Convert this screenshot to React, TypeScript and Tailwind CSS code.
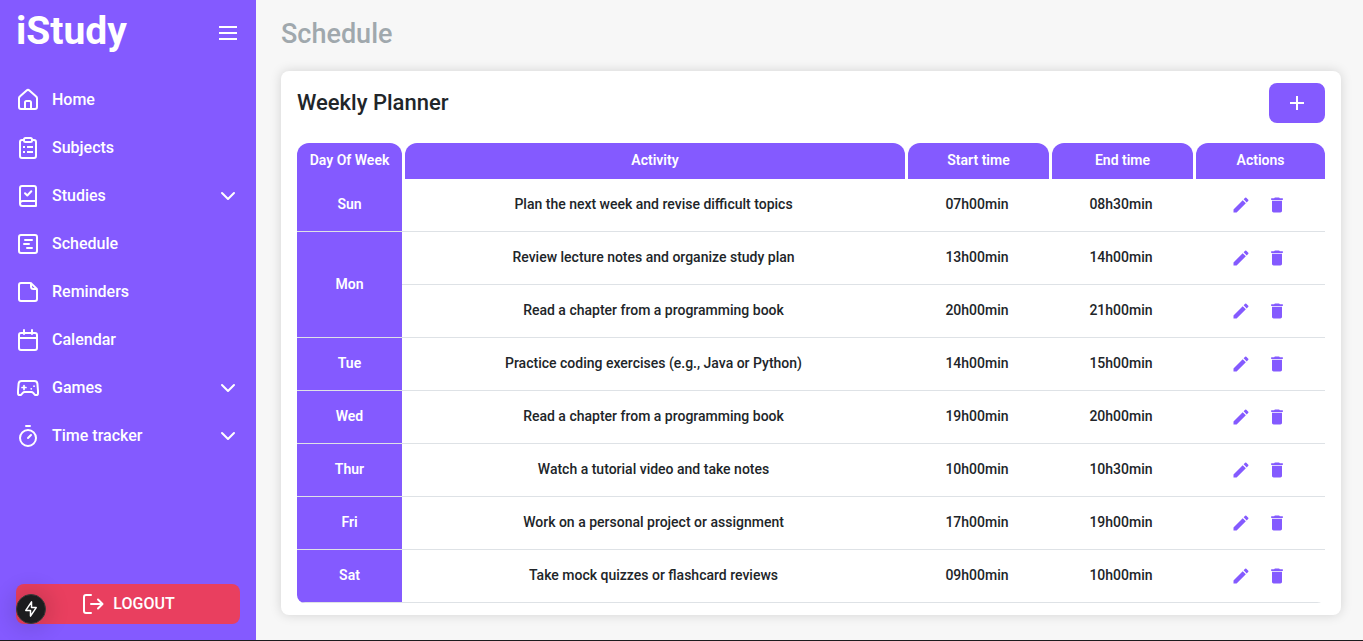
import type { ReactNode } from "react";
import { MdAdd, MdDelete, MdEdit } from "react-icons/md";

function Icon({ children }: { children: ReactNode }) {
  return (
    <svg
      viewBox="0 0 24 24"
      className="size-6 shrink-0"
      fill="none"
      stroke="currentColor"
      strokeWidth="2"
      strokeLinecap="round"
      strokeLinejoin="round"
      aria-hidden="true"
    >
      {children}
    </svg>
  );
}

const nav: { label: string; icon: ReactNode; expandable?: boolean }[] = [
  {
    label: "Home",
    icon: (
      <>
        <path d="M3 10.300c0-.7.3-1.300.8-1.700l6.800-6.100c.8-.7 2-.7 2.800 0l6.800 6.100c.5.4.8 1 .8 1.700V19c0 1.100-.9 2-2 2H5c-1.100 0-2-.9-2-2z" />
        <path d="M9 21v-6.500c0-1 .5-1.500 1.500-1.500h3c1 0 1.500.5 1.500 1.500V21" />
      </>
    ),
  },
  {
    label: "Subjects",
    icon: (
      <>
        <path d="M8 4H6a2 2 0 0 0-2 2v14a2 2 0 0 0 2 2h12a2 2 0 0 0 2-2V6a2 2 0 0 0-2-2h-2" />
        <rect x="8" y="2" width="8" height="4" rx="1.500" />
        <path strokeLinecap="butt" d="M7 11h2M11 11h6M7 16h2M11 16h6" />
      </>
    ),
  },
  {
    label: "Studies",
    expandable: true,
    icon: (
      <>
        <path d="M20 17V4a2 2 0 0 0-2-2H6a2 2 0 0 0-2 2v15.500M20 17H6.500a2.500 2.500 0 0 0 0 5H20z" />
        <path d="m9 9.200 2.300 2.300 4-4.300" />
      </>
    ),
  },
  {
    label: "Schedule",
    icon: (
      <>
        <rect x="3" y="3" width="18" height="18" rx="2" />
        <path d="M9 8h7M8 12h5M11 16h5" />
      </>
    ),
  },
  {
    label: "Reminders",
    icon: (
      <>
        <path d="M14 3H5a2 2 0 0 0-2 2v14a2 2 0 0 0 2 2h14a2 2 0 0 0 2-2v-9c0-.6-.2-1.100-.6-1.500l-4.900-4.900C15.100 3.200 14.600 3 14 3z" />
        <path d="M15 3.500v3A2.500 2.500 0 0 0 17.500 9h3" />
      </>
    ),
  },
  {
    label: "Calendar",
    icon: (
      <>
        <rect x="3" y="5" width="18" height="17" rx="2" />
        <path d="M3 10h18M8 2v4M16 2v4" />
      </>
    ),
  },
  {
    label: "Games",
    expandable: true,
    icon: (
      <>
        <path d="M5.600 5h12.800c1.600 0 2.800 1 3 2.600L22 15v2.200c0 1.100-.8 1.900-1.900 1.900-.6 0-1.200-.3-1.600-.8l-1.300-1.500c-.5-.6-1.100-.9-1.900-.9H8.700c-.8 0-1.400.3-1.900.9l-1.300 1.500c-.4.5-1 .8-1.600.8-1.100 0-1.900-.8-1.900-1.900V15l.6-7.400C2.800 6 4 5 5.600 5z" />
        <path strokeWidth="1.700" d="M8 9.500v4M6 11.500h4M15.200 12.800h.1M18 10.200h.1" />
      </>
    ),
  },
  {
    label: "Time tracker",
    expandable: true,
    icon: (
      <>
        <circle cx="12" cy="14" r="8" />
        <path d="m12 14 3-3M10 2h4" />
      </>
    ),
  },
];

type Entry = { activity: string; start: string; end: string };

const days: { day: string; entries: Entry[] }[] = [
  { day: "Sun", entries: [{ activity: "Plan the next week and revise difficult topics", start: "07h00min", end: "08h30min" }] },
  {
    day: "Mon",
    entries: [
      { activity: "Review lecture notes and organize study plan", start: "13h00min", end: "14h00min" },
      { activity: "Read a chapter from a programming book", start: "20h00min", end: "21h00min" },
    ],
  },
  { day: "Tue", entries: [{ activity: "Practice coding exercises (e.g., Java or Python)", start: "14h00min", end: "15h00min" }] },
  { day: "Wed", entries: [{ activity: "Read a chapter from a programming book", start: "19h00min", end: "20h00min" }] },
  { day: "Thur", entries: [{ activity: "Watch a tutorial video and take notes", start: "10h00min", end: "10h30min" }] },
  { day: "Fri", entries: [{ activity: "Work on a personal project or assignment", start: "17h00min", end: "19h00min" }] },
  { day: "Sat", entries: [{ activity: "Take mock quizzes or flashcard reviews", start: "09h00min", end: "10h00min" }] },
];

function Sidebar() {
  return (
    <aside className="relative flex w-64 shrink-0 flex-col bg-[#845aff] px-4 pb-4 text-white">
      <div className="flex h-[66px] items-center justify-between">
        <a href="#" className="pb-1 text-[39px] leading-none font-bold">
          iStudy
        </a>
        <button type="button" aria-label="Toggle menu">
          <Icon>
            <path strokeLinecap="butt" d="M3 6h18M3 12h18M3 18h18" />
          </Icon>
        </button>
      </div>
      <nav className="mt-[10px]">
        {nav.map((item) => (
          <a key={item.label} href="#" className="flex h-12 items-center gap-3 text-base font-medium">
            <Icon>{item.icon}</Icon>
            <span className="grow">{item.label}</span>
            {item.expandable && (
              <Icon>
                <path d="m6 9 6 6 6-6" />
              </Icon>
            )}
          </a>
        ))}
      </nav>
      <button
        type="button"
        className="mt-auto flex h-10 items-center justify-center gap-2 rounded-lg bg-[#e93f5f] text-base font-medium"
      >
        <Icon>
          <path d="M10 3H5a2 2 0 0 0-2 2v14a2 2 0 0 0 2 2h5M10 12h11M17 7.500l4.500 4.500-4.500 4.500" />
        </Icon>
        LOGOUT
      </button>
      <button
        type="button"
        aria-label="Quick tools"
        className="absolute bottom-4 left-4 flex size-[30px] items-center justify-center rounded-full border border-[#3a3a3a] bg-[#1c1c1e] shadow-[0_0_20px_6px_rgba(0,0,0,0.12)]"
      >
        <svg viewBox="0 0 16 16" className="size-4" fill="none" stroke="currentColor" strokeWidth="1.500" strokeLinejoin="round" aria-hidden="true">
          <path d="M8.500.9v5.700h4.700L7.500 15.100V9.400H2.800z" />
        </svg>
      </button>
    </aside>
  );
}

function HeadCell({ children }: { children: ReactNode }) {
  return (
    <th scope="col" className="p-0 pl-[3px] font-semibold">
      <div className="h-9 rounded-t-xl bg-[#845aff] leading-[34px]">{children}</div>
    </th>
  );
}

function Planner() {
  return (
    <table className="mt-5 w-full table-fixed border-separate border-spacing-0 overflow-hidden rounded-b-lg text-center text-sm font-medium text-[#212529]">
      <colgroup>
        <col className="w-[105px]" />
        <col />
        <col className="w-36" />
        <col className="w-36" />
        <col className="w-33" />
      </colgroup>
      <thead className="text-white">
        <tr>
          <th scope="col" className="p-0 font-semibold">
            <div className="h-9 rounded-t-xl bg-[#845aff] leading-[34px]">Day Of Week</div>
          </th>
          <HeadCell>Activity</HeadCell>
          <HeadCell>Start time</HeadCell>
          <HeadCell>End time</HeadCell>
          <HeadCell>Actions</HeadCell>
        </tr>
      </thead>
      <tbody>
        {days.map(({ day, entries }) =>
          entries.map((entry, i) => (
            <tr key={day + entry.start} className="h-[53px] *:border-b *:border-[#dee2e6]">
              {i === 0 && (
                <th scope="row" rowSpan={entries.length} className="bg-[#845aff] pb-0.5 font-semibold text-white">
                  {day}
                </th>
              )}
              <td className="pb-0.5">{entry.activity}</td>
              <td className="pb-0.5">{entry.start}</td>
              <td className="pb-0.5">{entry.end}</td>
              <td className="p-0">
                <div className="flex justify-center gap-4 text-[#845aff]">
                  <button type="button" aria-label={"Edit " + entry.activity}>
                    <MdEdit size={20} />
                  </button>
                  <button type="button" aria-label={"Delete " + entry.activity}>
                    <MdDelete size={20} />
                  </button>
                </div>
              </td>
            </tr>
          )),
        )}
      </tbody>
    </table>
  );
}

export default function App() {
  return (
    <div className="flex min-h-screen border-b border-[#1c1c1e] bg-[#f7f7f7] font-['Roboto',sans-serif]">
      <Sidebar />
      <main className="min-w-0 grow pr-[22px] pb-6 pl-[25px]">
        <h1 className="pt-4 text-[27px] leading-9 font-medium text-[#a0a8ad]">Schedule</h1>
        <section className="mt-[19px] rounded-lg bg-white px-4 py-3 shadow-[0_0_12px_rgba(0,0,0,0.15)]">
          <div className="flex h-10 items-center justify-between">
            <h2 className="pb-0.5 text-[22px] font-medium text-[#212529]">Weekly Planner</h2>
            <button
              type="button"
              aria-label="Add activity"
              className="flex h-10 w-14 items-center justify-center rounded-lg bg-[#845aff] text-white"
            >
              <MdAdd size={24} />
            </button>
          </div>
          <Planner />
        </section>
      </main>
    </div>
  );
}
